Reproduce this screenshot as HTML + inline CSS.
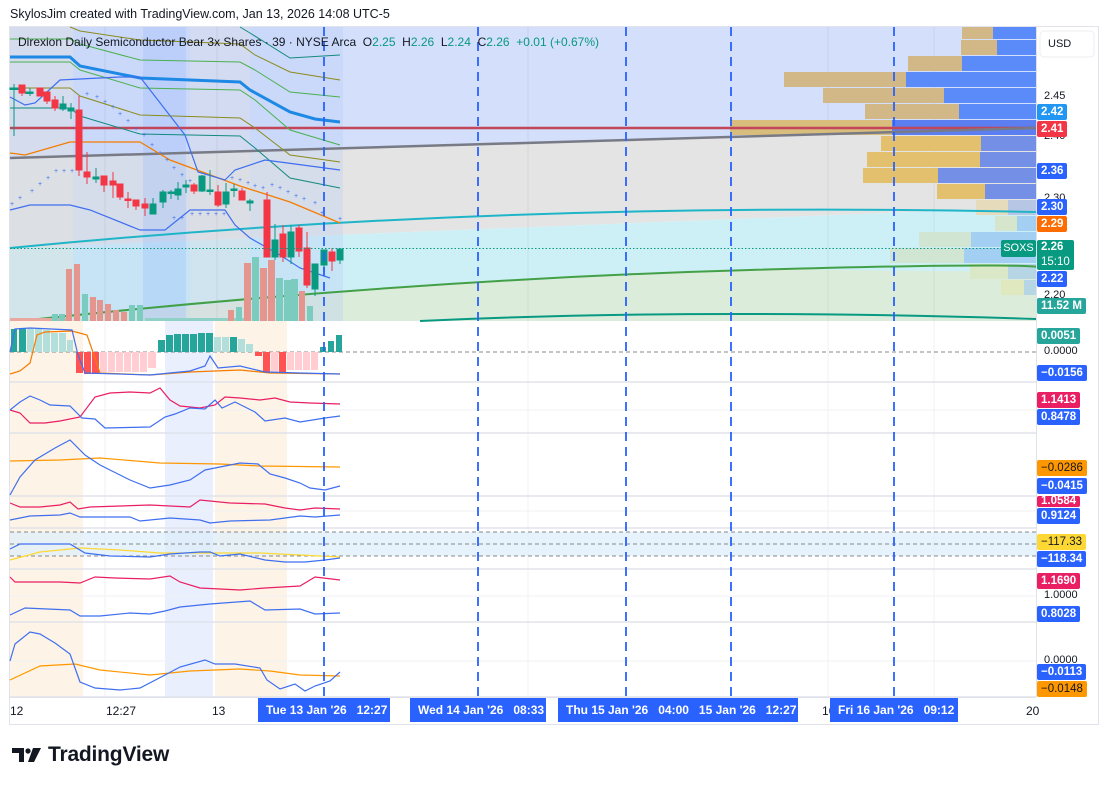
<!DOCTYPE html>
<html><head><meta charset="utf-8"><style>
body{margin:0;background:#fff;width:1108px;height:786px;overflow:hidden;font-family:"Liberation Sans",sans-serif;position:relative}
.t{position:absolute;white-space:nowrap}
.lb{position:absolute;left:1037px;height:16px;line-height:16px;font-size:11.5px;font-weight:bold;color:#fff;padding:0 4px;border-radius:2px}
.tx{position:absolute;left:1044px;font-size:11px;color:#131722}
.tl{position:absolute;top:698px;height:24px;line-height:24px;background:#2962ff;color:#fff;font-size:12px;font-weight:bold;padding-left:8px;white-space:pre}
</style></head><body>
<div class="t" style="left:10px;top:7px;font-size:12.5px;color:#131722">SkylosJim created with TradingView.com, Jan 13, 2026 14:08 UTC-5</div>
<svg width="1108" height="786" style="position:absolute;left:0;top:0">
<rect x="9.5" y="26.5" width="1089" height="698" fill="none" stroke="#e0e3eb"/>
<polygon points="10,27 1036,27 1036,128 10,158" fill="#d3dffb"/>
<polygon points="10,158 1036,128 1036,207 10,248" fill="#e4e4e4"/>
<polygon points="10,248 1036,207 1036,272 10,322" fill="#ccf0f5"/>
<polygon points="10,322 420,286 750,269 1036,272 1036,321 10,321" fill="#dcecdb"/>
<rect x="10" y="27" width="333" height="294" fill="#b9cdf6" opacity="0.35"/>
<rect x="10" y="27" width="63" height="294" fill="#f4e6d0" opacity="0.25"/>
<rect x="143" y="27" width="43" height="294" fill="#8fb3ff" opacity="0.25"/>
<rect x="190" y="27" width="60" height="294" fill="#f4e6d0" opacity="0.2"/>
<g stroke="#000" stroke-opacity="0.06">
<line x1="105" y1="27" x2="105" y2="697"/><line x1="217" y1="27" x2="217" y2="697"/><line x1="828" y1="27" x2="828" y2="697"/><line x1="934" y1="27" x2="934" y2="697"/><line x1="528" y1="27" x2="528" y2="697"/>
</g>
<g>
<rect x="962" y="27" width="31" height="12" fill="#d2b886"/><rect x="993" y="27" width="43" height="12" fill="#5b8af9"/>
<rect x="961" y="40" width="36" height="15" fill="#d2b886"/><rect x="997" y="40" width="39" height="15" fill="#5b8af9"/>
<rect x="908" y="56" width="54" height="15" fill="#d2b886"/><rect x="962" y="56" width="74" height="15" fill="#5b8af9"/>
<rect x="784" y="72" width="122" height="15" fill="#d2b886"/><rect x="906" y="72" width="130" height="15" fill="#5b8af9"/>
<rect x="823" y="88" width="121" height="15" fill="#d2b886"/><rect x="944" y="88" width="92" height="15" fill="#5b8af9"/>
<rect x="865" y="104" width="94" height="15" fill="#d2b886"/><rect x="959" y="104" width="77" height="15" fill="#5b8af9"/>
<rect x="730" y="120" width="162" height="15" fill="#d9bd7c"/><rect x="892" y="120" width="144" height="15" fill="#5b7ff0"/>
<rect x="881" y="136" width="100" height="15" fill="#e2c06e"/><rect x="981" y="136" width="55" height="15" fill="#7390e6"/>
<rect x="867" y="152" width="113" height="15" fill="#e2c06e"/><rect x="980" y="152" width="56" height="15" fill="#7390e6"/>
<rect x="863" y="168" width="75" height="15" fill="#e2c06e"/><rect x="938" y="168" width="98" height="15" fill="#7390e6"/>
<rect x="937" y="184" width="48" height="15" fill="#e2c06e"/><rect x="985" y="184" width="51" height="15" fill="#7390e6"/>
<rect x="976" y="200" width="32" height="15" fill="#e6dcbc"/><rect x="1008" y="200" width="28" height="15" fill="#b8c6e6"/>
<rect x="995" y="216" width="22" height="15" fill="#d6e6cc"/><rect x="1017" y="216" width="19" height="15" fill="#a3d0f2"/>
<rect x="919" y="232" width="52" height="15" fill="#d0e6d2"/><rect x="971" y="232" width="65" height="15" fill="#a3cff2"/>
<rect x="890" y="248" width="74" height="15" fill="#d0e6d2"/><rect x="964" y="248" width="72" height="15" fill="#a3cff2"/>
<rect x="970" y="264" width="38" height="15" fill="#dbe8c8"/><rect x="1008" y="264" width="28" height="15" fill="#b6d6e6"/>
<rect x="1001" y="280" width="23" height="15" fill="#e0e8c0"/><rect x="1024" y="280" width="12" height="15" fill="#b6d6e6"/>
</g>
<line x1="10" y1="128" x2="1036" y2="128" stroke="#c2455a" stroke-width="2.5"/>
<line x1="10" y1="158" x2="1036" y2="128" stroke="#787b86" stroke-width="2.5"/>
<path d="M10,248 Q500,200 1036,212" fill="none" stroke="#1fb5c8" stroke-width="2"/>
<path d="M10,322 Q400,280 750,270 T1036,272" fill="none" stroke="#43a047" stroke-width="2"/>
<path d="M420,321 Q700,308 1036,319" fill="none" stroke="#089981" stroke-width="2"/>
<polyline points="10,57 70,57 80,66 140,78 240,82 250,90 290,112 315,119 340,122" fill="none" stroke="#1e88e5" stroke-width="3"/>
<polyline points="70,27 80,31 140,40 240,44 255,55 290,72 340,80" fill="none" stroke="#8b8b1e" stroke-width="1"/>
<polyline points="10,39 70,39 80,44 140,60 240,62 255,70 290,92 340,97" fill="none" stroke="#4caf50" stroke-width="1"/>
<polyline points="10,62 70,62 80,70 140,88 240,90 255,100 290,130 340,145" fill="none" stroke="#4caf50" stroke-width="1"/>
<polyline points="10,88 70,88 80,96 140,115 240,118 255,128 290,155 340,162" fill="none" stroke="#8b8b1e" stroke-width="1"/>
<polyline points="10,108 70,108 80,116 140,134 240,136 255,148 290,178 340,188" fill="none" stroke="#138a7c" stroke-width="1"/>
<polyline points="240,27 250,33 290,58 340,55" fill="none" stroke="#138a7c" stroke-width="1"/>
<polyline points="10,153 25,155 70,142 140,142 170,160 240,186 290,202 340,223" fill="none" stroke="#f57c00" stroke-width="1.3"/>
<polyline points="10,97 25,105 35,103 60,80 120,77 140,77 185,135 198,172 225,180 235,170 265,160 280,162 340,170" fill="none" stroke="#3f6ff0" stroke-width="1.2"/>
<polyline points="10,210 30,205 70,205 90,210 140,230 165,230 190,210 225,210 235,225 250,238 280,255 300,268 330,278" fill="none" stroke="#3f6ff0" stroke-width="1.2"/>
<g fill="#3f6ff0" font-size="7">
<text x="10" y="206">+</text><text x="18" y="200">+</text><text x="30" y="193">+</text><text x="38" y="186">+</text><text x="46" y="180">+</text><text x="54" y="173">+</text><text x="62" y="173">+</text><text x="70" y="173">+</text><text x="85" y="96">+</text><text x="95" y="99">+</text><text x="103" y="104">+</text><text x="111" y="109">+</text><text x="118" y="116">+</text><text x="126" y="123">+</text><text x="134" y="131">+</text><text x="142" y="137">+</text><text x="150" y="147">+</text><text x="158" y="155">+</text><text x="165" y="162">+</text><text x="172" y="170">+</text><text x="180" y="177">+</text><text x="188" y="183">+</text><text x="172" y="220">+</text><text x="180" y="220">+</text><text x="190" y="216">+</text><text x="198" y="216">+</text><text x="206" y="216">+</text><text x="214" y="216">+</text><text x="222" y="216">+</text><text x="230" y="180">+</text><text x="238" y="182">+</text><text x="246" y="185">+</text><text x="253" y="188">+</text><text x="261" y="190">+</text><text x="270" y="187">+</text><text x="278" y="190">+</text><text x="286" y="194">+</text><text x="294" y="198">+</text><text x="302" y="201">+</text><text x="313" y="205">+</text><text x="320" y="215">+</text><text x="338" y="221">+</text>
</g>
<g>
<rect x="10" y="318" width="60" height="3" fill="#e8a8a0"/>
<rect x="52" y="314" width="6" height="7" fill="#7ccbbf"/><rect x="59" y="314" width="6" height="7" fill="#7ccbbf"/>
<rect x="66" y="269" width="6" height="52" fill="#e4958d"/><rect x="74" y="264" width="6" height="57" fill="#e4958d"/>
<rect x="82" y="294" width="6" height="27" fill="#7ccbbf"/><rect x="90" y="297" width="6" height="24" fill="#e4958d"/>
<rect x="97" y="300" width="6" height="21" fill="#e4958d"/><rect x="105" y="304" width="6" height="17" fill="#e4958d"/>
<rect x="113" y="310" width="6" height="11" fill="#e4958d"/><rect x="121" y="312" width="6" height="9" fill="#e4958d"/>
<rect x="129" y="305" width="6" height="16" fill="#7ccbbf"/><rect x="137" y="305" width="6" height="16" fill="#7ccbbf"/>
<rect x="145" y="318" width="100" height="3" fill="#8fd1c6"/>
<rect x="228" y="310" width="6" height="11" fill="#e4958d"/><rect x="236" y="307" width="6" height="14" fill="#7ccbbf"/>
<rect x="244" y="263" width="7" height="58" fill="#e4958d"/><rect x="252" y="257" width="7" height="64" fill="#7ccbbf"/>
<rect x="260" y="268" width="7" height="53" fill="#e4958d"/><rect x="268" y="260" width="7" height="61" fill="#e4958d"/>
<rect x="276" y="278" width="7" height="43" fill="#7ccbbf"/><rect x="284" y="280" width="7" height="41" fill="#7ccbbf"/>
<rect x="291" y="279" width="7" height="42" fill="#7ccbbf"/><rect x="299" y="291" width="6" height="30" fill="#e4958d"/>
<rect x="307" y="306" width="6" height="15" fill="#7ccbbf"/>
</g>
<g stroke-width="1">
<g stroke="#089981" fill="#089981">
<line x1="14" y1="84" x2="14" y2="136"/><rect x="10" y="88" width="8" height="1.5"/>
<line x1="30" y1="88" x2="30" y2="96"/><rect x="26" y="92" width="7" height="1.5"/>
<line x1="63" y1="96" x2="63" y2="111"/><rect x="60" y="104" width="6" height="5"/>
<line x1="71" y1="103" x2="71" y2="119"/><rect x="68" y="108" width="6" height="3"/>
<line x1="96" y1="168" x2="96" y2="183"/><rect x="93" y="177" width="6" height="2"/>
<line x1="153" y1="198" x2="153" y2="214"/><rect x="150" y="204" width="6" height="10"/>
<line x1="163" y1="190" x2="163" y2="208"/><rect x="160" y="192" width="6" height="10"/>
<line x1="171" y1="190" x2="171" y2="199"/><rect x="168" y="192" width="6" height="1.5"/>
<line x1="178" y1="182" x2="178" y2="200"/><rect x="175" y="189" width="6" height="6"/>
<line x1="186" y1="180" x2="186" y2="193"/><rect x="183" y="185" width="6" height="2"/>
<line x1="202" y1="175" x2="202" y2="192"/><rect x="199" y="176" width="6" height="15"/>
<line x1="210" y1="170" x2="210" y2="195"/><rect x="207" y="190" width="6" height="1.5"/>
<line x1="226" y1="183" x2="226" y2="208"/><rect x="223" y="192" width="6" height="12"/>
<line x1="234" y1="184" x2="234" y2="197"/><rect x="231" y="189" width="6" height="1.5"/>
<line x1="250" y1="199" x2="250" y2="211"/><rect x="247" y="201" width="6" height="2"/>
<line x1="275" y1="224" x2="275" y2="260"/><rect x="272" y="240" width="6" height="17"/>
<line x1="291" y1="225" x2="291" y2="264"/><rect x="288" y="232" width="6" height="25"/>
<line x1="315" y1="264" x2="315" y2="296"/><rect x="312" y="264" width="6" height="25"/>
<line x1="324" y1="250" x2="324" y2="272"/><rect x="321" y="250" width="6" height="15"/>
<line x1="340" y1="249" x2="340" y2="264"/><rect x="337" y="249" width="6" height="11"/>
</g>
<g stroke="#f23645" fill="#f23645">
<line x1="22" y1="85" x2="22" y2="96"/><rect x="19" y="85" width="6" height="8"/>
<rect x="37" y="88" width="6" height="8"/>
<line x1="47" y1="92" x2="47" y2="104"/><rect x="44" y="92" width="6" height="9"/>
<line x1="55" y1="96" x2="55" y2="111"/><rect x="52" y="100" width="6" height="8"/>
<line x1="79" y1="96" x2="79" y2="176"/><rect x="76" y="110" width="6" height="60"/>
<line x1="87" y1="152" x2="87" y2="184"/><rect x="84" y="172" width="6" height="5"/>
<line x1="104" y1="176" x2="104" y2="192"/><rect x="101" y="176" width="6" height="9"/>
<line x1="113" y1="172" x2="113" y2="198"/><rect x="110" y="181" width="6" height="4"/>
<line x1="120" y1="184" x2="120" y2="200"/><rect x="117" y="184" width="6" height="13"/>
<line x1="128" y1="192" x2="128" y2="208"/><rect x="125" y="199" width="6" height="1.5"/>
<line x1="136" y1="200" x2="136" y2="210"/><rect x="133" y="200" width="6" height="6"/>
<line x1="145" y1="198" x2="145" y2="216"/><rect x="142" y="204" width="6" height="4"/>
<line x1="194" y1="183" x2="194" y2="194"/><rect x="191" y="185" width="6" height="6"/>
<line x1="218" y1="185" x2="218" y2="207"/><rect x="215" y="192" width="6" height="13"/>
<line x1="242" y1="188" x2="242" y2="200"/><rect x="239" y="191" width="6" height="9"/>
<line x1="267" y1="192" x2="267" y2="257"/><rect x="264" y="200" width="6" height="57"/>
<line x1="283" y1="225" x2="283" y2="262"/><rect x="280" y="234" width="6" height="23"/>
<line x1="299" y1="225" x2="299" y2="257"/><rect x="296" y="228" width="6" height="23"/>
<line x1="307" y1="232" x2="307" y2="288"/><rect x="304" y="248" width="6" height="37"/>
<line x1="332" y1="248" x2="332" y2="271"/><rect x="329" y="252" width="6" height="9"/>
</g>
</g>
<line x1="10" y1="248.5" x2="1036" y2="248.5" stroke="#089981" stroke-dasharray="1.5,2"/>
<rect x="10" y="321" width="73" height="376" fill="#fdf3e6"/>
<rect x="165" y="321" width="48" height="376" fill="#e9effd"/>
<rect x="215" y="321" width="72" height="376" fill="#fdf3e6"/>
<rect x="10" y="532" width="1026" height="24" fill="#dbeefb" opacity="0.7"/>
<g stroke="#e0e3eb" stroke-width="1.5">
<line x1="10" y1="382" x2="1098" y2="382"/><line x1="10" y1="433" x2="1098" y2="433"/><line x1="10" y1="496" x2="1098" y2="496"/><line x1="10" y1="528" x2="1098" y2="528"/><line x1="10" y1="569" x2="1098" y2="569"/><line x1="10" y1="622" x2="1098" y2="622"/><line x1="10" y1="697" x2="1098" y2="697"/>
</g>
<g stroke="#f0f2f5"><line x1="10" y1="410" x2="1036" y2="410"/><line x1="10" y1="511" x2="1036" y2="511"/><line x1="10" y1="596" x2="1036" y2="596"/><line x1="10" y1="661" x2="1036" y2="661"/></g>
<g stroke="#888" stroke-dasharray="4,3"><line x1="10" y1="352" x2="1036" y2="352"/><line x1="10" y1="532" x2="1036" y2="532"/><line x1="10" y1="544" x2="1036" y2="544"/><line x1="10" y1="556" x2="1036" y2="556"/></g>
<g>
<rect x="11" y="329" width="6" height="23" fill="#26a69a"/><rect x="19" y="328" width="7" height="24" fill="#26a69a"/>
<rect x="27" y="328" width="7" height="24" fill="#b2dfdb"/><rect x="35" y="328" width="7" height="24" fill="#b2dfdb"/><rect x="43" y="330" width="7" height="22" fill="#b2dfdb"/><rect x="51" y="333" width="7" height="19" fill="#b2dfdb"/><rect x="59" y="333" width="7" height="19" fill="#b2dfdb"/><rect x="67" y="340" width="6" height="12" fill="#b2dfdb"/>
<rect x="76" y="352" width="7" height="21" fill="#ff5252"/><rect x="84" y="352" width="7" height="22" fill="#ff5252"/><rect x="92" y="352" width="7" height="22" fill="#ff5252"/>
<rect x="100" y="352" width="7" height="20" fill="#ffcdd2"/><rect x="108" y="352" width="7" height="20" fill="#ffcdd2"/><rect x="116" y="352" width="7" height="20" fill="#ffcdd2"/><rect x="124" y="352" width="7" height="20" fill="#ffcdd2"/><rect x="132" y="352" width="7" height="20" fill="#ffcdd2"/><rect x="140" y="352" width="7" height="20" fill="#ffcdd2"/><rect x="148" y="352" width="8" height="16" fill="#ffcdd2"/>
<rect x="158" y="340" width="7" height="12" fill="#26a69a"/><rect x="166" y="335" width="7" height="17" fill="#26a69a"/><rect x="174" y="334" width="7" height="18" fill="#26a69a"/><rect x="182" y="334" width="7" height="18" fill="#26a69a"/><rect x="190" y="334" width="7" height="18" fill="#26a69a"/><rect x="198" y="333" width="7" height="19" fill="#26a69a"/><rect x="206" y="333" width="7" height="19" fill="#26a69a"/>
<rect x="214" y="337" width="7" height="15" fill="#b2dfdb"/><rect x="222" y="337" width="7" height="15" fill="#b2dfdb"/><rect x="230" y="337" width="7" height="15" fill="#26a69a"/><rect x="238" y="339" width="7" height="13" fill="#b2dfdb"/><rect x="246" y="344" width="7" height="8" fill="#b2dfdb"/>
<rect x="255" y="352" width="7" height="4" fill="#ff5252"/><rect x="263" y="352" width="7" height="20" fill="#ff5252"/><rect x="271" y="352" width="7" height="20" fill="#ffcdd2"/><rect x="279" y="352" width="7" height="21" fill="#ff5252"/>
<rect x="287" y="352" width="7" height="18" fill="#ffcdd2"/><rect x="295" y="352" width="7" height="18" fill="#ffcdd2"/><rect x="303" y="352" width="7" height="18" fill="#ffcdd2"/><rect x="311" y="352" width="7" height="18" fill="#ffcdd2"/>
<rect x="320" y="347" width="6" height="5" fill="#26a69a"/><rect x="328" y="341" width="6" height="11" fill="#26a69a"/><rect x="336" y="335" width="6" height="17" fill="#26a69a"/>
</g>
<g fill="none" stroke-width="1.2">
<polyline points="10,374 20,371 30,363 37,335 45,332 72,331 87,335 95,358 100,373 150,375 190,372 240,370 270,373 340,374" stroke="#f57c00"/>
<polyline points="10,352 15,329 30,328 72,330 78,355 85,373 150,375 190,371 205,366 210,356 218,368 240,366 265,372 300,373 340,374" stroke="#3f6ff0"/>
<polyline points="10,410 20,413 30,423 45,423 60,421 80,417 95,397 110,393 130,392 150,393 160,388 170,400 180,406 200,408 215,405 225,397 240,398 260,400 275,398 290,402 310,403 340,404" stroke="#e91e63"/>
<polyline points="10,410 20,402 30,396 40,400 50,405 70,406 82,418 95,419 105,428 150,427 165,417 175,414 190,408 205,409 215,400 222,408 235,402 255,412 265,421 285,418 300,422 325,418 340,416" stroke="#3f6ff0"/>
<polyline points="10,461 60,460 100,458 160,463 220,464 260,466 340,467" stroke="#ff9800"/>
<polyline points="10,495 20,477 35,460 55,448 70,440 85,455 100,465 130,480 150,488 170,485 190,480 205,470 220,467 240,463 258,464 270,474 285,478 300,483 310,488 325,490 340,486" stroke="#3f6ff0"/>
<polyline points="10,503 20,507 40,507 60,505 70,502 78,509 90,507 150,505 190,507 200,500 230,503 265,504 285,508 300,510 315,508 340,509" stroke="#e91e63"/>
<polyline points="10,520 30,516 60,515 70,513 80,517 130,517 140,521 170,518 200,520 210,523 230,521 270,520 300,516 315,517 340,515" stroke="#3f6ff0"/>
<polyline points="10,560 40,552 80,548 120,550 160,553 200,553 260,553 300,555 340,557" stroke="#fdd835"/>
<polyline points="10,549 20,544 70,544 85,553 110,556 150,557 170,554 200,552 210,552 220,556 240,554 265,560 285,562 305,562 325,560 340,558" stroke="#3f6ff0"/>
<polyline points="10,577 15,582 30,582 60,582 80,583 95,577 115,578 150,579 170,576 180,582 200,588 240,590 265,588 300,586 315,577 340,580" stroke="#e91e63"/>
<polyline points="10,615 25,608 70,610 80,616 100,616 130,613 150,614 165,611 180,607 210,604 250,601 265,610 300,609 315,614 340,613" stroke="#3f6ff0"/>
<polyline points="10,680 40,666 75,664 100,670 150,675 190,671 240,669 270,671 300,675 340,676" stroke="#ff9800"/>
<polyline points="10,661 15,644 30,632 40,634 55,643 70,654 80,682 95,688 120,690 140,688 165,675 180,667 205,660 215,664 235,664 260,668 267,680 280,689 295,684 305,691 315,686 330,681 340,672" stroke="#3f6ff0"/>
</g>
<g stroke="#2962ff" stroke-width="2" stroke-dasharray="9,6" opacity="0.9">
<line x1="324" y1="27" x2="324" y2="697"/><line x1="478" y1="27" x2="478" y2="697"/><line x1="626" y1="27" x2="626" y2="697"/><line x1="731" y1="27" x2="731" y2="697"/><line x1="894" y1="27" x2="894" y2="697"/>
</g>
<rect x="1036" y="27" width="62" height="697" fill="#fff"/>
<line x1="1036.5" y1="27" x2="1036.5" y2="697" stroke="#e0e3eb"/>
<rect x="1040" y="31" width="54" height="26" rx="4" fill="#fff" stroke="#eee"/>
<line x1="10" y1="697.5" x2="1036" y2="697.5" stroke="#e0e3eb"/>
<g fill="#131722">
<path d="M12,748 h12 v14 h-5 v-9 h-7z"/><circle cx="28" cy="751" r="2.6"/><path d="M33,748 h8 l-7,14 h-6z"/>
</g>
</svg>
<div class="t" style="left:1048px;top:38px;font-size:11px;color:#131722">USD</div>
<div class="t" style="left:18px;top:35px;font-size:12px;color:#131722">Direxion Daily Semiconductor Bear 3x Shares · 39 · NYSE Arca&nbsp; O<span style="color:#089981">2.25</span>&nbsp; H<span style="color:#089981">2.26</span>&nbsp; L<span style="color:#089981">2.24</span>&nbsp; C<span style="color:#089981">2.26&nbsp; +0.01 (+0.67%)</span></div>
<div class="t" style="left:48px;top:743px;font-size:21px;font-weight:bold;color:#131722;letter-spacing:-0.2px">TradingView</div>
<div class="tx" style="top:90px">2.45</div>
<div class="tx" style="top:130px">2.40</div>
<div class="tx" style="top:192px">2.30</div>
<div class="tx" style="top:289px">2.20</div>
<div class="lb" style="top:104px;background:#2196f3">2.42</div>
<div class="lb" style="top:121px;background:#f23645">2.41</div>
<div class="lb" style="top:163px;background:#2962ff">2.36</div>
<div class="lb" style="top:199px;background:#2962ff">2.30</div>
<div class="lb" style="top:216px;background:#ff6d00">2.29</div>
<div class="lb" style="top:240px;height:30px;line-height:15px;background:#089981">2.26<br><span style="font-weight:normal">15:10</span></div>
<div class="t" style="left:1001px;top:240px;width:35px;height:17px;line-height:17px;text-align:center;background:#089981;color:#fff;font-size:11px;border-radius:2px">SOXS</div>
<div class="lb" style="top:271px;background:#2962ff">2.22</div>
<div class="lb" style="top:298px;background:#26a69a">11.52 M</div>
<div class="lb" style="top:328px;background:#26a69a">0.0051</div>
<div class="tx" style="top:345px">0.0000</div>
<div class="lb" style="top:365px;background:#2962ff">−0.0156</div>
<div class="lb" style="top:392px;background:#e91e63">1.1413</div>
<div class="lb" style="top:409px;background:#2962ff">0.8478</div>
<div class="lb" style="top:460px;background:#ff9800;color:#131722;font-weight:normal">−0.0286</div>
<div class="lb" style="top:478px;background:#2962ff">−0.0415</div>
<div class="lb" style="top:496px;height:11px;line-height:10px;background:#e91e63;overflow:hidden">1.0584</div>
<div class="lb" style="top:508px;background:#2962ff">0.9124</div>
<div class="lb" style="top:534px;background:#fdd835;color:#131722;font-weight:normal">−117.33</div>
<div class="lb" style="top:551px;background:#2962ff">−118.34</div>
<div class="lb" style="top:573px;background:#e91e63">1.1690</div>
<div class="tx" style="top:589px">1.0000</div>
<div class="lb" style="top:606px;background:#2962ff">0.8028</div>
<div class="tx" style="top:654px">0.0000</div>
<div class="lb" style="top:664px;background:#2962ff">−0.0113</div>
<div class="lb" style="top:681px;background:#ff9800;color:#131722;font-weight:normal">−0.0148</div>
<div class="t" style="left:10px;top:704px;font-size:12px;color:#131722">12</div>
<div class="t" style="left:106px;top:704px;font-size:12px;color:#131722">12:27</div>
<div class="t" style="left:212px;top:704px;font-size:12px;color:#131722">13</div>
<div class="t" style="left:822px;top:704px;font-size:12px;color:#131722">16</div>
<div class="t" style="left:1026px;top:704px;font-size:12px;color:#131722">20</div>
<div class="tl" style="left:258px;width:124px">Tue 13 Jan '26   12:27</div>
<div class="tl" style="left:410px;width:128px">Wed 14 Jan '26   08:33</div>
<div class="tl" style="left:558px;width:232px">Thu 15 Jan '26   04:00   15 Jan '26   12:27</div>
<div class="tl" style="left:830px;width:120px">Fri 16 Jan '26   09:12</div>
</body></html>
